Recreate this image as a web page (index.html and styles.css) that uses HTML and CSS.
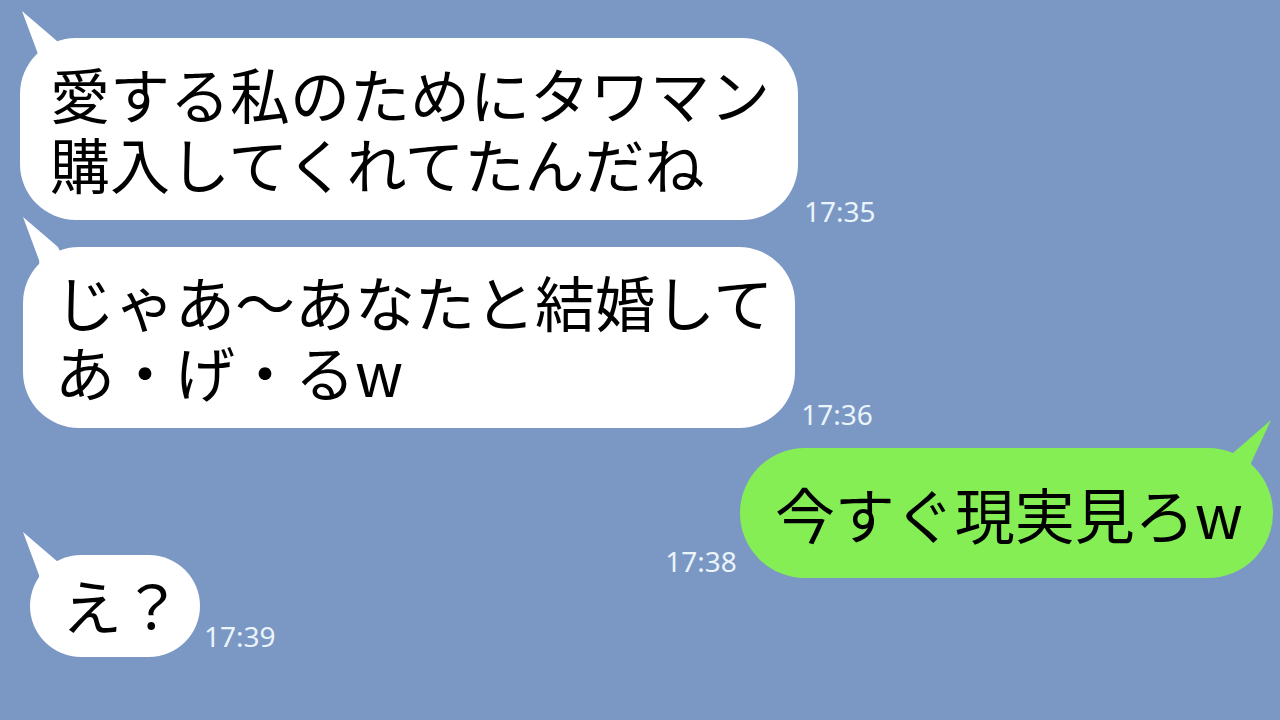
FILE: index.html
```html
<!DOCTYPE html>
<html lang="ja">
<head>
    <meta charset="UTF-8">
    <meta name="viewport" content="width=device-width, initial-scale=1.0">
    <title>トーク</title>
    <link rel="stylesheet" href="styles.css">
</head>
<body>
    <div class="chat">
        <div class="row row-first">
            <div class="bubble bubble-first">愛する私のためにタワマン<br>購入してくれてたんだね</div>
            <span class="time time-first">17:35</span>
        </div>
        <div class="row row-second">
            <div class="bubble bubble-second">じゃあ〜あなたと結婚して<br>あ・げ・るw</div>
            <span class="time time-second">17:36</span>
        </div>
        <div class="row row-mine">
            <span class="time time-mine">17:38</span>
            <div class="bubble bubble-mine">今すぐ現実見ろw</div>
        </div>
        <div class="row row-last">
            <div class="bubble bubble-last">え？</div>
            <span class="time time-last">17:39</span>
        </div>
    </div>
</body>
</html>
```

FILE: styles.css
```css
body {
    margin: 0;
    background-color: #7b98c4;
    height: 720px;
    overflow: hidden;
}
.chat {
    display: flex;
    flex-direction: column;
    padding-top: 38px;
}
.row {
    display: flex;
    align-items: flex-end;
    gap: 6px;
}
.row-first {
    margin-left: 20px;
}
.row-second {
    margin-left: 23px;
    margin-top: 27px;
}
.row-mine {
    justify-content: flex-end;
    margin-right: 7px;
    margin-top: 20px;
    gap: 3px;
}
.row-last {
    margin-left: 30px;
    margin-top: -23px;
    gap: 4px;
}

/* speech bubbles */
.bubble {
    position: relative;
    background-color: #fff;
    color: #000;
    font-family: "Noto Sans CJK JP", sans-serif;
    font-size: 60px;
    line-height: 70px;
    white-space: nowrap;
    border-radius: 56px;
}
.bubble::before {
    content: "";
    position: absolute;
    left: 0;
    top: -27px;
    width: 60px;
    height: 80px;
    background-color: inherit;
    clip-path: polygon(2px 0, 37px 30px, 50px 60px, 20px 60px, 18px 43px);
}
.bubble-first {
    padding: 20px 28px 22px 30px;
}
.bubble-second {
    padding: 19px 22px 22px 32px;
}
.bubble-second::before {
    left: -2px;
    top: -30px;
}
.bubble-last {
    padding: 14px 18px 18px 32px;
    border-radius: 51px;
}
.bubble-last::before {
    left: -9px;
    top: -23px;
}
.bubble-mine {
    background-color: #86ee55;
    padding: 30px 30px 30px 35px;
    border-radius: 65px;
}
.bubble-mine::before {
    left: auto;
    right: 0;
    top: -28px;
    clip-path: polygon(58px 0, 20px 33px, 10px 60px, 40px 60px, 38px 43px);
}

/* timestamps */
.time {
    font-family: "Noto Sans", sans-serif;
    font-size: 28px;
    line-height: 28px;
    color: #eaf4fb;
}
.time-first {
    margin-bottom: -5px;
}
.time-mine {
    margin-bottom: 3px;
}
.time-last {
    margin-bottom: 7px;
}
```
